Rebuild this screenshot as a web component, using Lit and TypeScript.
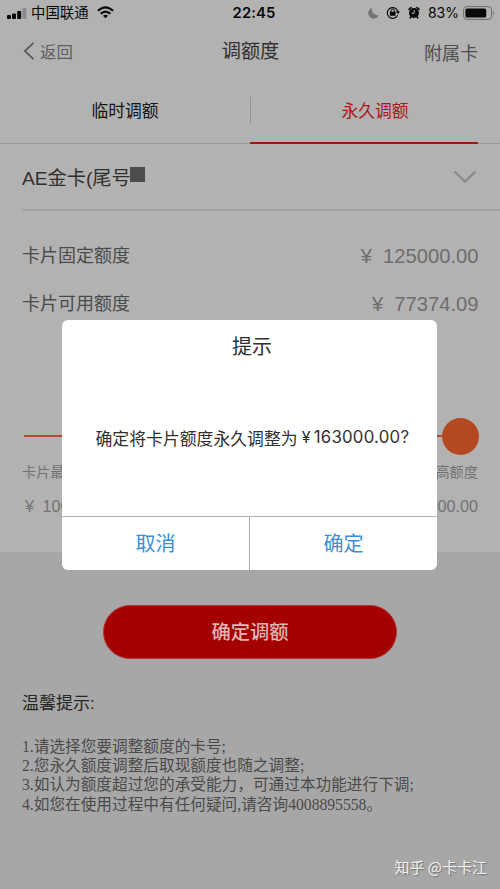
import { LitElement, html, css } from "lit";
import { customElement } from "lit/decorators.js";

@customElement("status-bar")
class StatusBar extends LitElement {
  static styles = css`
    :host { display: flex; height: 25px; align-items: center; justify-content: space-between; padding: 0 4px 0 7px; color: #080808; font-size: 14.4px; line-height: 25px; box-sizing: border-box; }
    .side { display: flex; align-items: center; width: 200px; white-space: nowrap; }
    .right { justify-content: flex-end; }
    .carrier { padding-top: 1px; }
    .signal { margin: 2px 4px 0 0; }
    .wifi { margin-left: 8px; }
    .time { font: 600 14.8px/26px Inter, sans-serif; letter-spacing: 0.1px; padding-left: 5px; }
    .moon { margin-right: 7px; }
    .lock { margin-right: 8px; }
    .alarm { margin-right: 8px; }
    .pct { font: 400 14px/26px Inter, sans-serif; margin-right: 4px; }
    svg { display: block; flex: none; }
  `;
  render() {
    return html`
      <div class="side">
        <svg class="signal" width="20" height="12" viewBox="0 0 20 12">
          <rect x="0" y="7" width="4" height="4" rx="1" fill="#080808" />
          <rect x="5" y="5.5" width="4" height="5.5" rx="1" fill="#080808" />
          <rect x="10.2" y="3" width="4" height="8" rx="1" fill="#080808" />
          <rect x="15.4" y="0" width="4" height="11" rx="1" fill="#8b8b8b" />
        </svg>
        <span class="carrier">中国联通</span>
        <svg class="wifi" width="17" height="13" viewBox="0 0 17 13" fill="none" stroke="#080808" stroke-width="2.1">
          <path d="M0.9 4.8Q8.5 -2.2 16.1 4.8" />
          <path d="M3.6 7.8Q8.5 3.4 13.4 7.8" />
          <path d="M8.5 12.3L5.9 9.7Q8.5 7.7 11.1 9.7Z" fill="#080808" stroke="none" />
        </svg>
      </div>
      <div class="time">22:45</div>
      <div class="side right">
        <svg class="moon" width="11" height="12" viewBox="0 0 11 12">
          <path d="M4 1A5.4 5.4 0 1 0 10.6 8.3A6 6 0 0 1 4 1Z" fill="#747474" />
        </svg>
        <svg class="lock" width="14" height="13" viewBox="0 0 14 13">
          <path d="M11.6 9.3A5.4 5.4 0 1 1 11.8 5.2" fill="none" stroke="#080808" stroke-width="1.2" />
          <path d="M9.8 5.2H14L12 8.2Z" fill="#080808" />
          <rect x="3.9" y="5.8" width="5.6" height="4" rx=".5" fill="#080808" />
          <path d="M5 6V4.8a1.7 1.7 0 0 1 3.4 0V6" fill="none" stroke="#080808" stroke-width="1" />
        </svg>
        <svg class="alarm" width="12" height="13" viewBox="0 0 12 13">
          <circle cx="6" cy="7" r="5" fill="#080808" />
          <path d="M1 3.3L3 1.6M11 3.3L9 1.6M2.8 11L2.2 11.9M9.2 11L9.8 11.9" stroke="#080808" stroke-width="1.6" stroke-linecap="round" />
          <path d="M6.2 4V7.3H3.8" fill="none" stroke="#b2b2b2" stroke-width="1" />
        </svg>
        <span class="pct">83%</span>
        <svg width="33" height="14" viewBox="0 0 33 14">
          <rect x=".6" y=".6" width="28" height="12.8" rx="3.2" fill="none" stroke="#6b6b6b" stroke-width="1" />
          <rect x="2.4" y="2.4" width="20.8" height="9.2" rx="1.5" fill="#080808" />
          <path d="M30.3 5Q32.3 7 30.3 9Z" fill="#6b6b6b" />
        </svg>
      </div>
    `;
  }
}

@customElement("confirm-dialog")
class ConfirmDialog extends LitElement {
  static styles = css`
    :host { display: flex; flex-direction: column; width: 375px; height: 250px; background: #fff; border-radius: 6px; overflow: hidden; color: #303030; text-align: center; }
    .title { padding-top: 11px; padding-left: 5px; font-size: 20px; line-height: 32px; }
    .message { flex: 1; display: flex; align-items: center; padding-left: 33.5px; padding-bottom: 5px; font-size: 16.85px; white-space: nowrap; }
    .amount { font-family: Inter, "Noto Sans CJK SC", sans-serif; font-size: 16.8px; letter-spacing: 0.25px; }
    .yen { margin: 0 3px 0 4px; font-size: 16px; }
    .actions { display: flex; height: 54px; border-top: 1px solid #b4b4b4; color: #3a8fd8; font-size: 20px; line-height: 54px; box-sizing: border-box; }
    .action { flex: 1; }
    .action + .action { border-left: 1px solid #a8a8a8; }
  `;
  render() {
    return html`
      <div class="title">提示</div>
      <div class="message">
        <span>确定将卡片额度永久调整为</span><span class="amount"><span class="yen">¥</span>163000.00?</span>
      </div>
      <div class="actions">
        <div class="action">取消</div>
        <div class="action">确定</div>
      </div>
    `;
  }
}

@customElement("app-root")
class AppRoot extends LitElement {
  static styles = css`
    :host { display: block; position: relative; width: 500px; height: 889px; overflow: hidden; background: #a7a7a7; font-family: "Liberation Sans", "Noto Sans CJK SC", sans-serif; color: #393939; }
    * { box-sizing: border-box; }
    svg { display: block; }
    .panel { height: 552px; background: #b2b2b2; }
    .nav { display: grid; grid-template-columns: 1fr auto 1fr; height: 53px; padding: 0 22px 0 23px; white-space: nowrap; }
    .back { display: flex; gap: 5px; align-items: center; font-size: 16.4px; color: #5d5d5d; height: 52px; }
    .heading { font-size: 19.2px; line-height: 53px; color: #303030; }
    .extra { text-align: right; font-size: 18px; line-height: 58px; color: #4d4d4d; }
    .tabs { display: flex; height: 66px; padding-right: 22px; border-bottom: 1px solid #999; font-size: 16.8px; line-height: 68px; text-align: center; color: #141414; }
    .tab { width: 250px; flex: none; }
    .tab.active { position: relative; width: 228px; padding-left: 22px; color: #a61a1a; border-bottom: 2px solid #a61111; height: 66px; }
    .tab.active::before { content: ""; position: absolute; left: 0; top: 19px; height: 27px; width: 1px; background: #929292; }
    .card { display: flex; align-items: center; justify-content: space-between; margin-left: 22px; height: 67px; padding-right: 23px; border-bottom: 2px solid #a2a2a2; font-size: 19.2px; color: #303030; }
    .name { display: flex; align-items: center; }
    .mask { width: 15px; height: 15px; background: #4c4c4c; margin: -4px 0 0 -1px; }
    .row { display: flex; justify-content: space-between; height: 48px; line-height: 49px; padding: 0 21.5px 0 22px; font-size: 18px; color: #4b4b4b; }
    .rows { padding-top: 20.5px; }
    .money { font-size: 20.2px; color: #6d6d6d; word-spacing: 5.5px; }
    .slider { display: flex; align-items: center; margin: 89.5px 21px 0 24px; height: 38px; }
    .track { flex: 1; height: 2px; background: #b94a2f; }
    .knob { width: 37px; height: 37px; border-radius: 50%; background: #b44921; }
    .limits { display: flex; justify-content: space-between; padding: 0 22px; font-size: 14.2px; line-height: 34px; color: #727272; }
    .limits.values { font-size: 16.2px; word-spacing: 4px; padding-left: 25px; }
    .submit { margin: 53px auto 0 103px; width: 294px; height: 54px; border-radius: 27px; background: #a50000; border: 1px solid #b13030; color: #dfb5b5; text-align: center; font-size: 19.3px; font-weight: 500; line-height: 53px; }
    .tips { padding: 33px 22px 0; }
    .tips-title { font-size: 17px; line-height: 24px; color: #252525; margin-bottom: 20.5px; }
    .tip { font: 15.66px/19.4px "Liberation Serif", "Noto Sans CJK SC", serif; color: #4a4a4a; white-space: nowrap; }
    .dialog { position: absolute; left: 62px; top: 320px; }
    .watermark { position: absolute; right: 13px; bottom: 11px; font: 15px/22px "Noto Sans CJK SC", sans-serif; color: #f2f2f2; text-shadow: 1px 1px 1px #707070; }
  `;
  tips = [
    "1.请选择您要调整额度的卡号;",
    "2.您永久额度调整后取现额度也随之调整;",
    "3.如认为额度超过您的承受能力，可通过本功能进行下调;",
    "4.如您在使用过程中有任何疑问,请咨询4008895558。",
  ];
  render() {
    return html`
      <div class="panel">
        <status-bar></status-bar>
        <div class="nav">
          <div class="back">
            <svg width="12" height="18" viewBox="0 0 12 18" fill="none" stroke="#555" stroke-width="1.7"><path d="M10.5 .8L2 9L10.5 17.2" /></svg>
            <span>返回</span>
          </div>
          <div class="heading">调额度</div>
          <div class="extra">附属卡</div>
        </div>
        <div class="tabs">
          <div class="tab">临时调额</div>
          <div class="tab active">永久调额</div>
        </div>
        <div class="card">
          <div class="name"><span>AE金卡(尾号</span><span class="mask"></span></div>
          <svg width="24" height="14" viewBox="0 0 24 14" fill="none" stroke="#8b8b8b" stroke-width="2.4"><path d="M1.5 1.5L12 11.5L22.5 1.5" /></svg>
        </div>
        <div class="rows">
          <div class="row"><span>卡片固定额度</span><span class="money">¥ 125000.00</span></div>
          <div class="row"><span>卡片可用额度</span><span class="money">¥ 77374.09</span></div>
        </div>
        <div class="slider"><div class="track"></div><div class="knob"></div></div>
        <div class="limits"><span>卡片最低额度</span><span>卡片最高额度</span></div>
        <div class="limits values"><span>¥ 10000.00</span><span>¥ 163000.00</span></div>
      </div>
      <div class="submit">确定调额</div>
      <div class="tips">
        <div class="tips-title">温馨提示:</div>
        ${this.tips.map((t) => html`<div class="tip">${t}</div>`)}
      </div>
      <confirm-dialog class="dialog"></confirm-dialog>
      <div class="watermark">知乎 @卡卡江</div>
    `;
  }
}
